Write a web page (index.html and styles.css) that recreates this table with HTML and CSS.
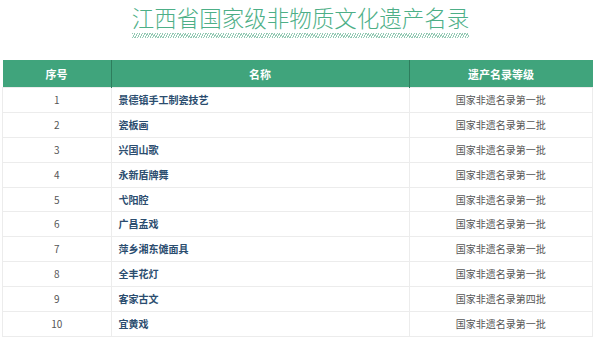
FILE: index.html
```html
<!DOCTYPE html>
<html lang="zh">
<head>
<meta charset="utf-8">
<link rel="stylesheet" href="styles.css">
</head>
<body>
<div class="page">
  <header class="head">
    <h1 class="title">江西省国家级非物质文化遗产名录</h1>
    <div class="hatch"></div>
  </header>
  <table class="list">
    <thead>
      <tr><th class="c1">序号</th><th class="c2">名称</th><th class="c3">遗产名录等级</th></tr>
    </thead>
    <tbody>
      <tr><td class="num">1</td><td class="name">景德镇手工制瓷技艺</td><td class="lvl">国家非遗名录第一批</td></tr>
      <tr><td class="num">2</td><td class="name">瓷板画</td><td class="lvl">国家非遗名录第二批</td></tr>
      <tr><td class="num">3</td><td class="name">兴国山歌</td><td class="lvl">国家非遗名录第一批</td></tr>
      <tr><td class="num">4</td><td class="name">永新盾牌舞</td><td class="lvl">国家非遗名录第一批</td></tr>
      <tr><td class="num">5</td><td class="name">弋阳腔</td><td class="lvl">国家非遗名录第一批</td></tr>
      <tr><td class="num">6</td><td class="name">广昌孟戏</td><td class="lvl">国家非遗名录第一批</td></tr>
      <tr><td class="num">7</td><td class="name">萍乡湘东傩面具</td><td class="lvl">国家非遗名录第一批</td></tr>
      <tr><td class="num">8</td><td class="name">全丰花灯</td><td class="lvl">国家非遗名录第一批</td></tr>
      <tr><td class="num">9</td><td class="name">客家古文</td><td class="lvl">国家非遗名录第四批</td></tr>
      <tr><td class="num">10</td><td class="name">宜黄戏</td><td class="lvl">国家非遗名录第一批</td></tr>
    </tbody>
  </table>
</div>
</body>
</html>
```

FILE: styles.css
```css
html, body {
  margin: 0;
  padding: 0;
  background: #ffffff;
}
body {
  font-family: "Noto Sans CJK SC", "Noto Sans", sans-serif;
}
.page {
  width: 600px;
  height: 338px;
  overflow: hidden;
  padding: 0 7px 0 2px;
  box-sizing: border-box;
}
.head {
  display: flex;
  flex-direction: column;
  align-items: center;
  padding-top: 4px;
}
.title {
  margin: 0;
  font-size: 22.5px;
  font-weight: 300;
  line-height: 26px;
  color: #4daf87;
  white-space: nowrap;
  padding-left: 6px;
}
.hatch {
  width: 337px;
  height: 5px;
  margin-top: 3px;
  margin-left: 6px;
  background: repeating-linear-gradient(120deg, #93c9b3 0, #93c9b3 1px, #ffffff 1px, #ffffff 2.2px);
}
.list {
  margin-top: 22px;
  width: 591px;
  border-collapse: collapse;
  table-layout: fixed;
}
.list th {
  background: #40a47c;
  color: #ffffff;
  font-size: 11px;
  font-weight: 700;
  height: 27px;
  padding: 0;
  border-right: 1px solid #2e7d5d;
  text-align: center;
}
.list th:last-child { border-right: none; }
.c1 { width: 108px; }
.c2 { width: 297px; }
.c3 { width: auto; }
.list td {
  height: 23.9px;
  padding: 0;
  font-size: 10px;
  border: 1px solid #ececec;
  line-height: 14px;
}
.num {
  text-align: center;
  color: #555555;
}
.name {
  color: #2b4d6f;
  font-weight: 700;
  padding-left: 7px !important;
}
.lvl {
  text-align: center;
  color: #555555;
}
```
